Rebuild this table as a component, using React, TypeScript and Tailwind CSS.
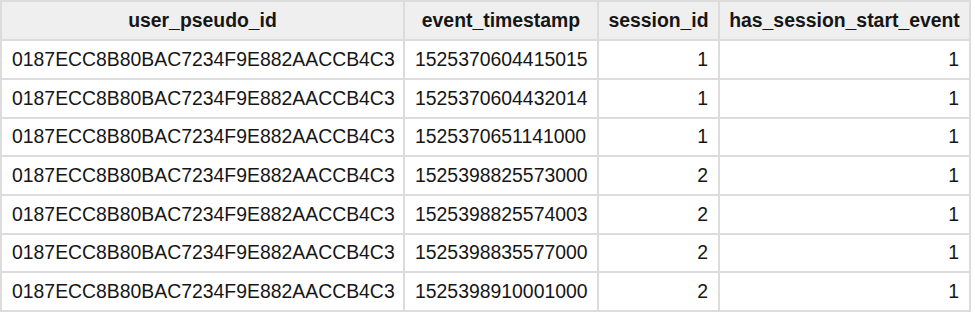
import React from "react";

const rows: [string, string, number, number][] = [
  ["0187ECC8B80BAC7234F9E882AACCB4C3", "1525370604415015", 1, 1],
  ["0187ECC8B80BAC7234F9E882AACCB4C3", "1525370604432014", 1, 1],
  ["0187ECC8B80BAC7234F9E882AACCB4C3", "1525370651141000", 1, 1],
  ["0187ECC8B80BAC7234F9E882AACCB4C3", "1525398825573000", 2, 1],
  ["0187ECC8B80BAC7234F9E882AACCB4C3", "1525398825574003", 2, 1],
  ["0187ECC8B80BAC7234F9E882AACCB4C3", "1525398835577000", 2, 1],
  ["0187ECC8B80BAC7234F9E882AACCB4C3", "1525398910001000", 2, 1],
];

const heights = ["h-[39px]", "h-[39px]", "h-[38px]", "h-[39px]", "h-[39px]", "h-[38px]", "h-[39px]"];

export default function App() {
  return (
    <div className="w-[975px] h-[319px] bg-white overflow-hidden" style={{ fontFamily: '"Liberation Sans", Arial, sans-serif' }}>
      <div className="w-[971px] border-l-2 border-t-2 border-[#dcdcdc] text-[19.4px] text-[#161616]">
        <div className="grid grid-cols-[403px_194px_121px_251px] h-[39px] bg-[#efefef] font-bold">
          <div className="flex items-center justify-center border-r-2 border-b-2 border-[#dcdcdc]">user_pseudo_id</div>
          <div className="flex items-center justify-center border-r-2 border-b-2 border-[#dcdcdc]">event_timestamp</div>
          <div className="flex items-center justify-center border-r-2 border-b-2 border-[#dcdcdc]">session_id</div>
          <div className="flex items-center justify-center border-r-2 border-b-2 border-[#dcdcdc]">has_session_start_event</div>
        </div>
        {rows.map((r, i) => (
          <div key={i} className={`grid grid-cols-[403px_194px_121px_251px] ${heights[i]}`}>
            <div className="flex items-center pl-[10px] border-r-2 border-b-2 border-[#dcdcdc]">{r[0]}</div>
            <div className="flex items-center pl-[10px] border-r-2 border-b-2 border-[#dcdcdc]">{r[1]}</div>
            <div className="flex items-center justify-end pr-[10px] border-r-2 border-b-2 border-[#dcdcdc]">{r[2]}</div>
            <div className="flex items-center justify-end pr-[10px] border-r-2 border-b-2 border-[#dcdcdc]">{r[3]}</div>
          </div>
        ))}
      </div>
    </div>
  );
}
